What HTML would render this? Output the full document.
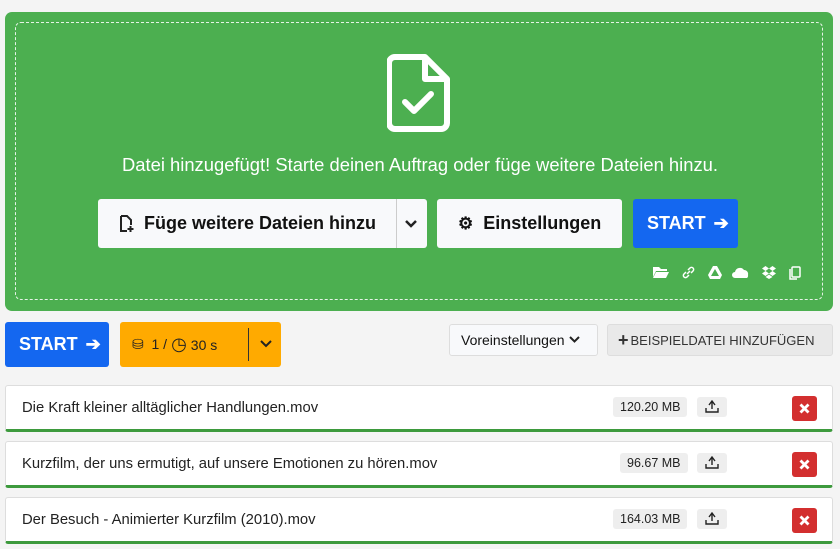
<!DOCTYPE html>
<html><head><meta charset="utf-8"><style>
*{box-sizing:border-box;margin:0;padding:0}
body{width:840px;height:549px;background:#f4f4f4;font-family:"Liberation Sans",sans-serif;position:relative;overflow:hidden;color:#222}
.abs{position:absolute}
.green{left:5px;top:12px;width:828px;height:299px;background:#4caf50;border-radius:7px}
.dash{left:15px;top:22px;width:808px;height:278px;border:1px dashed #e6f3e6;border-radius:6px}
.msg{left:0;width:840px;top:154px;text-align:center;color:#fff;font-size:18.4px}
.btn{display:flex;align-items:center;border-radius:3px;font-size:18px}
.w{background:#f8f9fb;color:#111}
.blue{background:#1467f0;color:#fff;font-weight:bold}
.row{left:5px;width:828px;height:47px;background:#fff;border:1px solid #ddd;border-bottom:3px solid #3d9a3d;border-radius:3px}
.row .n{position:absolute;left:16px;top:14px;font-size:14.8px;color:#222}
.size{position:absolute;top:11px;height:20px;background:#eee;border-radius:3px;font-size:12.5px;padding:3px 7px;color:#222}
.up{position:absolute;left:691px;top:11px;width:30px;height:20px;background:#eee;border-radius:3px}
.up svg{position:absolute;left:8px;top:3px}
.x{position:absolute;left:786px;top:10px;width:25px;height:25px;background:#d32f2f;border-radius:3px}
.x svg{position:absolute;left:7px;top:7px}
.ic{position:absolute;top:266px}
</style></head><body>
<div class="abs green"></div>
<div class="abs dash"></div>
<svg class="abs" style="left:387px;top:54px" width="64" height="78" viewBox="0 0 64 78"><path d="M8 3h30l22 22v44a6 6 0 0 1-6 6H8a6 6 0 0 1-6-6V9a6 6 0 0 1 6-6z" fill="none" stroke="#fff" stroke-width="6" stroke-linejoin="round"/><path d="M38 3v22h22" fill="none" stroke="#fff" stroke-width="6" stroke-linejoin="round"/><path d="M18 48l9 9 17-17" fill="none" stroke="#fff" stroke-width="6" stroke-linecap="round" stroke-linejoin="round"/></svg>
<div class="abs msg">Datei hinzugefügt! Starte deinen Auftrag oder füge weitere Dateien hinzu.</div>
<div class="abs btn w" style="left:98px;top:199px;width:329px;height:49px;font-weight:bold">
<svg style="margin:0 10px 0 21px" width="15" height="18" viewBox="0 0 15 18"><path d="M2 1h6l4 4v5M8 16H2V1" fill="none" stroke="#222" stroke-width="2"/><path d="M11.5 11v6M8.5 14h6" stroke="#222" stroke-width="2"/></svg>Füge weitere Dateien hinzu
<div style="position:absolute;left:298px;top:0;width:1px;height:49px;background:#ccc"></div>
<svg style="position:absolute;left:306px;top:20px" width="14" height="9" viewBox="0 0 14 9"><path d="M2 2l5 5 5-5" fill="none" stroke="#222" stroke-width="2.5"/></svg></div>
<div class="abs btn w" style="left:437px;top:199px;width:185px;height:49px;font-weight:bold"><span style="margin:0 10px 0 21px;font-size:17px">⚙</span>Einstellungen</div>
<div class="abs btn blue" style="left:633px;top:199px;width:105px;height:49px;padding-left:14px">START <span style="margin-left:8px">➔</span></div>
<svg class="ic" style="left:653px" width="16" height="12" viewBox="0 0 16 12"><path d="M0 1h6l2 2h6v2H3L0 11zM3 6h13l-3 6H0z" fill="#fff"/></svg>
<svg class="ic" style="left:682px" width="13" height="13" viewBox="0 0 13 13"><path d="M5 8l3-3M4 6L2 8a2 2 0 0 0 3 3l2-2M9 7l2-2a2 2 0 0 0-3-3L6 4" fill="none" stroke="#fff" stroke-width="1.5"/></svg>
<svg class="ic" style="left:708px" width="14" height="13" viewBox="0 0 14 13"><path d="M5 0h4l5 9-2 4H2L0 9zM7 3L3 10h8z" fill="#fff" fill-rule="evenodd"/></svg>
<svg class="ic" style="left:732px" width="18" height="12" viewBox="0 0 18 12"><path d="M3 12a3 3 0 0 1 0-6 5 5 0 0 1 9-2 4 4 0 0 1 4 5 3 3 0 0 1-1 3z" fill="#fff"/></svg>
<svg class="ic" style="left:762px" width="14" height="13" viewBox="0 0 14 13"><path d="M3.5 0L0 2.5 3.5 5 7 2.5zM10.5 0L7 2.5l3.5 2.5L14 2.5zM3.5 5L0 7.5 3.5 10 7 7.5zM10.5 5L7 7.5l3.5 2.5L14 7.5zM3.5 11L7 13l3.5-2L7 8.5z" fill="#fff"/></svg>
<svg class="ic" style="left:788px" width="13" height="14" viewBox="0 0 13 14"><rect x="4" y="1" width="8" height="10" rx="1" fill="none" stroke="#fff" stroke-width="1.5"/><path d="M2 3v10h7" fill="none" stroke="#fff" stroke-width="1.5"/></svg>
<div class="abs btn blue" style="left:5px;top:322px;width:104px;height:45px;padding-left:14px">START <span style="margin-left:8px">➔</span></div>
<div class="abs btn" style="left:120px;top:322px;width:161px;height:45px;background:#ffaa00;color:#222;font-size:14px;padding-left:12px">⛁&nbsp; 1 / <span style="font-size:18px;margin:0 4px">◷</span> 30 s
<div style="position:absolute;left:128px;top:6px;width:1px;height:33px;background:#333"></div>
<svg style="position:absolute;left:140px;top:18px" width="12" height="8" viewBox="0 0 12 8"><path d="M1 1l5 5 5-5" fill="none" stroke="#222" stroke-width="2"/></svg></div>
<div class="abs btn w" style="left:449px;top:324px;width:149px;height:32px;border:1px solid #ddd;font-size:14px;padding-left:11px">Voreinstellungen<svg style="margin-left:4px" width="11" height="8" viewBox="0 0 11 8"><path d="M1 1l4.5 4.5L10 1" fill="none" stroke="#222" stroke-width="2"/></svg></div>
<div class="abs btn" style="left:607px;top:324px;width:226px;height:32px;background:#e9e9e9;border:1px solid #ddd;font-size:13px;padding-left:10px;color:#333;white-space:nowrap"><b style="font-size:18px;margin-right:2px">+</b>BEISPIELDATEI HINZUFÜGEN</div>
<div class="abs row" style="top:385px"><div class="n">Die Kraft kleiner alltäglicher Handlungen.mov</div><div class="size" style="left:607px">120.20 MB</div><div class="up"><svg width="14" height="13" viewBox="0 0 14 13"><path d="M1 8v4h12V8M4 5l3-4 3 4M7 1v8" fill="none" stroke="#222" stroke-width="1.4"/></svg></div><div class="x"><svg width="11" height="11" viewBox="0 0 11 11"><path d="M1.5 1.5l8 8M9.5 1.5l-8 8" stroke="#fff" stroke-width="2.8"/></svg></div></div>
<div class="abs row" style="top:441px"><div class="n">Kurzfilm, der uns ermutigt, auf unsere Emotionen zu hören.mov</div><div class="size" style="left:614px">96.67 MB</div><div class="up"><svg width="14" height="13" viewBox="0 0 14 13"><path d="M1 8v4h12V8M4 5l3-4 3 4M7 1v8" fill="none" stroke="#222" stroke-width="1.4"/></svg></div><div class="x"><svg width="11" height="11" viewBox="0 0 11 11"><path d="M1.5 1.5l8 8M9.5 1.5l-8 8" stroke="#fff" stroke-width="2.8"/></svg></div></div>
<div class="abs row" style="top:497px"><div class="n">Der Besuch - Animierter Kurzfilm (2010).mov</div><div class="size" style="left:607px">164.03 MB</div><div class="up"><svg width="14" height="13" viewBox="0 0 14 13"><path d="M1 8v4h12V8M4 5l3-4 3 4M7 1v8" fill="none" stroke="#222" stroke-width="1.4"/></svg></div><div class="x"><svg width="11" height="11" viewBox="0 0 11 11"><path d="M1.5 1.5l8 8M9.5 1.5l-8 8" stroke="#fff" stroke-width="2.8"/></svg></div></div>
</body></html>
